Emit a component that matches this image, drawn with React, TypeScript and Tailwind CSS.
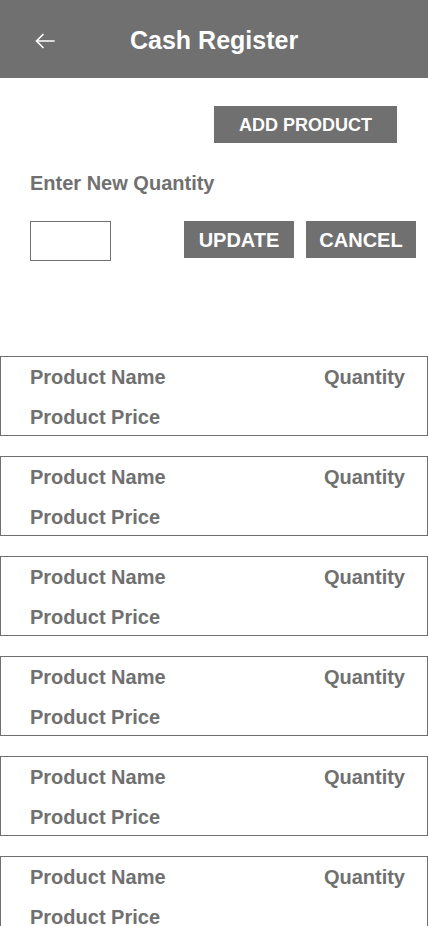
const products = [1, 2, 3, 4, 5, 6];

function BackArrow() {
  return (
    <svg width="20" height="16" viewBox="0 0 20 16" fill="none" stroke="white" strokeWidth="1.7" strokeLinecap="round" strokeLinejoin="round">
      <path d="M19 8H1.5" />
      <path d="M8 1.5L1.5 8L8 14.5" />
    </svg>
  );
}

export default function App() {
  return (
    <div className="min-h-[926px] w-[428px] bg-white font-['Liberation_Sans',Arial,sans-serif] text-[#707070] overflow-hidden">
      <header className="h-[78px] bg-[#707070] flex items-center pt-[3px] px-[35px]">
        <BackArrow />
        <h1 className="ml-[75px] text-[25px] font-bold text-white">Cash Register</h1>
      </header>

      <div className="flex justify-end pr-[31px] pt-[28px]">
        <button className="w-[183px] h-[37px] pt-[2px] bg-[#707070] text-white text-[18px] font-bold">
          ADD PRODUCT
        </button>
      </div>

      <p className="mt-[28px] pl-[30px] text-[20px] font-bold leading-[24px]">Enter New Quantity</p>

      <div className="mt-[26px] flex items-start pl-[30px]">
        <input className="w-[81px] h-[40px] border border-[#707070] outline-none" />
        <button className="ml-[73px] w-[110px] h-[37px] pt-[1px] bg-[#707070] text-white text-[20px] font-bold">
          UPDATE
        </button>
        <button className="ml-[12px] w-[110px] h-[37px] pt-[1px] bg-[#707070] text-white text-[20px] font-bold">
          CANCEL
        </button>
      </div>

      <div className="mt-[95px] flex flex-col gap-[20px]">
        {products.map((p) => (
          <div key={p} className="h-[80px] border border-[#707070] pl-[29px] pr-[22px] pt-[8px] flex flex-col gap-[16px]">
            <div className="flex justify-between text-[20px] font-bold leading-[24px]">
              <span>Product Name</span>
              <span>Quantity</span>
            </div>
            <div className="text-[20px] font-bold leading-[24px]">Product Price</div>
          </div>
        ))}
      </div>
    </div>
  );
}
